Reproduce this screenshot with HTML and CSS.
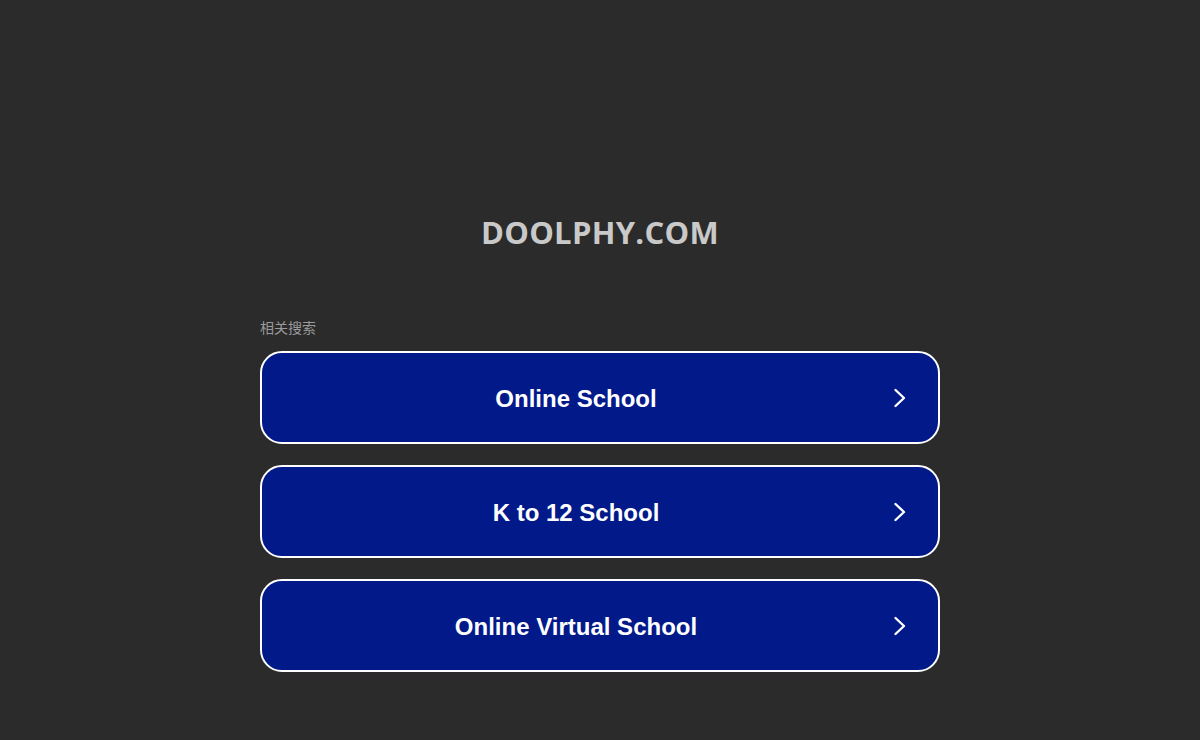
FILE: index.html
```html
<!DOCTYPE html>
<html lang="zh">
<head>
<meta charset="utf-8">
<title>doolphy.com</title>
<link rel="stylesheet" href="styles.css">
</head>
<body>
<div class="page">
  <h1 class="domain">DOOLPHY.COM</h1>
  <div class="related">
    <div class="label">相关搜索</div>
    <a class="btn" href="#"><span class="btn-text">Online School</span><svg class="chev" viewBox="0 0 14 20" width="14" height="20"><path d="M2.5 2 L11 10 L2.5 18" fill="none" stroke="#fff" stroke-width="2.4" stroke-linecap="round" stroke-linejoin="round"/></svg></a>
    <a class="btn" href="#"><span class="btn-text">K to 12 School</span><svg class="chev" viewBox="0 0 14 20" width="14" height="20"><path d="M2.5 2 L11 10 L2.5 18" fill="none" stroke="#fff" stroke-width="2.4" stroke-linecap="round" stroke-linejoin="round"/></svg></a>
    <a class="btn" href="#"><span class="btn-text">Online Virtual School</span><svg class="chev" viewBox="0 0 14 20" width="14" height="20"><path d="M2.5 2 L11 10 L2.5 18" fill="none" stroke="#fff" stroke-width="2.4" stroke-linecap="round" stroke-linejoin="round"/></svg></a>
  </div>
</div>
</body>
</html>
```
FILE: styles.css
```css
html, body {
  margin: 0;
  padding: 0;
  background: #2b2b2b;
  height: 100%;
}
.page {
  display: flex;
  flex-direction: column;
  align-items: center;
  padding-top: 211px;
}
.domain {
  margin: 0;
  font-family: "Open Sans", "Liberation Sans", sans-serif;
  font-weight: 700;
  font-size: 31px;
  line-height: 42px;
  color: #c9c9c9;
  letter-spacing: 0.3px;
}
.related {
  width: 680px;
  margin-top: 65px;
  display: flex;
  flex-direction: column;
}
.label {
  font-family: "Noto Sans CJK SC", "Liberation Sans", sans-serif;
  font-size: 14px;
  line-height: 18px;
  color: #9a9a9a;
  margin-bottom: 15px;
}
.btn {
  box-sizing: border-box;
  height: 93px;
  margin-bottom: 21px;
  border: 2px solid #ffffff;
  border-radius: 22px;
  background: #011989;
  display: flex;
  align-items: center;
  text-decoration: none;
  padding: 0 31px 0 0;
}
.btn-text {
  flex: 1;
  text-align: center;
  font-family: "Liberation Sans", Arial, sans-serif;
  font-weight: 700;
  font-size: 24px;
  color: #ffffff;
  margin-right: 3px;
  padding-top: 2px;
}
.chev {
  display: block;
  flex: none;
}
```
